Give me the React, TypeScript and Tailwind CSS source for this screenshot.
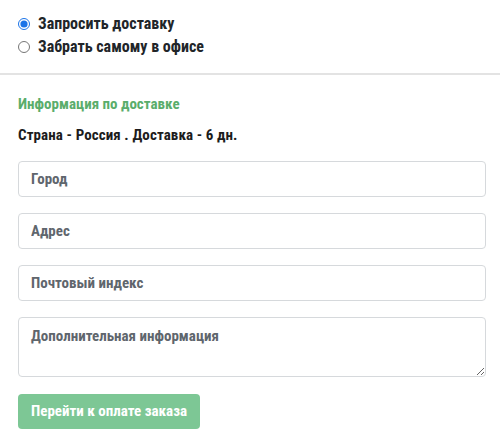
export default function App() {
    const field =
        'w-[468px] rounded-[4px] border border-[#d6d9dc] px-[12px] text-[15px] font-bold placeholder:text-[#5f666d] outline-none';

    return (
        <div className="w-[500px] h-[437px] overflow-hidden bg-white text-[#212529] font-['Roboto',sans-serif] font-stretch-condensed">
            {/* Delivery choice */}
            <div className="px-[18px] pt-[12px] pb-[15px] border-b-2 border-[#e3e3e3]">
                <label className="flex items-center gap-[8px] h-[23px] text-[16px] font-bold">
                    <input type="radio" name="delivery" defaultChecked className="w-[12px] h-[12px] m-0 accent-[#1a73e8]" />
                    Запросить доставку
                </label>
                <label className="flex items-center gap-[8px] h-[23px] text-[16px] font-bold">
                    <input type="radio" name="delivery" className="w-[12px] h-[12px] m-0" />
                    Забрать самому в офисе
                </label>
            </div>

            {/* Delivery info */}
            <div className="pl-[18px] pt-[19px]">
                <h3 className="text-[15px] font-bold text-[#5aad6b] leading-[20px]">Информация по доставке</h3>
                <p className="mt-[11px] text-[15px] font-bold tracking-[0.1px] text-[#1c1c1c] leading-[20px]">
                    Страна - Россия . Доставка - 6 дн.
                </p>

                <div className="mt-[16px] flex flex-col gap-[16px]">
                    <input placeholder="Город" className={`h-[36px] ${field}`} />
                    <input placeholder="Адрес" className={`h-[36px] ${field}`} />
                    <input placeholder="Почтовый индекс" className={`h-[36px] ${field}`} />
                    <textarea placeholder="Дополнительная информация" className={`h-[60px] py-[7px] ${field}`} />
                </div>

                <button className="mt-[17px] h-[35px] px-[13px] rounded-[4px] bg-[#7dc795] text-white text-[15px] font-bold">
                    Перейти к оплате заказа
                </button>
            </div>
        </div>
    );
}
